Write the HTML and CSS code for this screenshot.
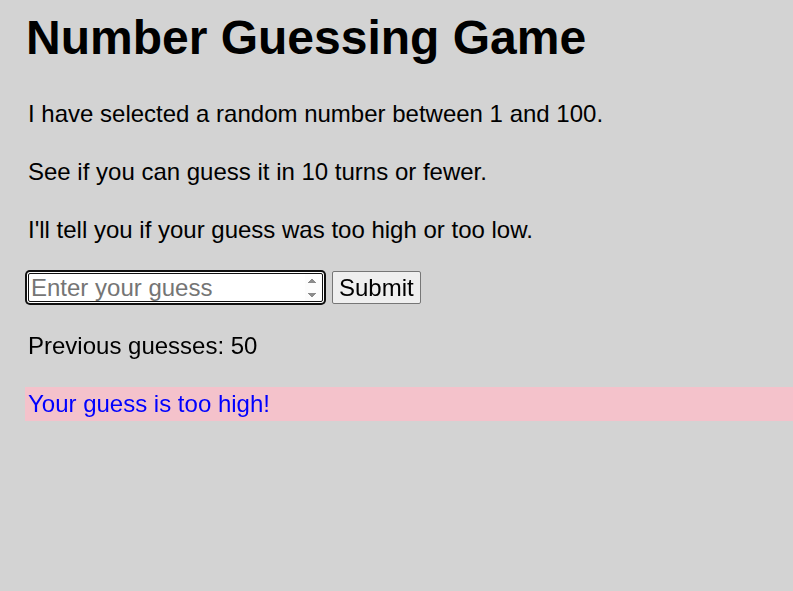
FILE: index.html
```html
<!DOCTYPE html>
<html lang="en">
<head>
<meta charset="utf-8">
<title>Number guessing game</title>
<link rel="stylesheet" href="styles.css">
</head>
<body>
<h1 class="title">Number Guessing Game</h1>
<p class="para">I have selected a random number between 1 and 100.</p>
<p class="para">See if you can guess it in 10 turns or fewer.</p>
<p class="para">I'll tell you if your guess was too high or too low.</p>
<div class="form">
  <input type="number" class="guess-field" placeholder="Enter your guess" autofocus>
  <button type="button" class="guess-submit">Submit</button>
</div>
<p class="guesses">Previous guesses: 50</p>
<p class="last-result">Your guess is too high!</p>
</body>
</html>
```
FILE: styles.css
```css
html {
  font-family: "Liberation Sans", Arial, sans-serif;
  background: #d3d3d3;
}
body {
  margin: 0;
  padding: 10px 0 0 28px;
  font-size: 24px;
  color: #000;
}
.title {
  font-size: 48px;
  font-weight: bold;
  line-height: normal;
  margin: 0 0 35px -2px;
}
.para {
  margin: 0 0 30px;
  line-height: normal;
}
.form {
  display: flex;
  align-items: center;
  gap: 9px;
  margin: -3px 0 28px;
}
.guess-field {
  box-sizing: border-box;
  width: 295px;
  height: 29px;
  margin: 0;
  padding: 0 2px;
  font: 24px "Liberation Sans", Arial, sans-serif;
  border: 1px solid #101010;
  border-radius: 2px;
  background: #fff;
  outline: none;
  box-shadow: 0 0 0 1px #fff, 0 0 0 3px #101010;
}
.guess-field::placeholder {
  color: #757575;
}
.guess-field::-webkit-inner-spin-button {
  opacity: 1;
}
.guess-submit {
  box-sizing: border-box;
  height: 33px;
  margin: 0;
  padding: 1px 6px;
  font: 24px "Liberation Sans", Arial, sans-serif;
  color: #000;
  background: #efefef;
  border: 1px solid #767676;
  border-radius: 2px;
}
.guesses {
  margin: 0 0 27px;
  line-height: normal;
}
.last-result {
  margin: 0 0 0 -3px;
  padding: 3px;
  line-height: normal;
  color: #0000ff;
  background: #f4c2cb;
}
```
